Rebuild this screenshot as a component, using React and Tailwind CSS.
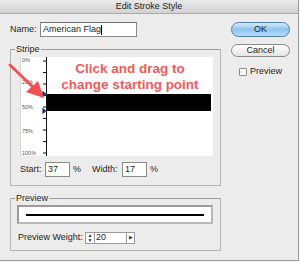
export default function App() {
  return (
    <div className="relative w-[300px] h-[262px] bg-[#f4f4f4] font-['Liberation_Sans',Arial,sans-serif] text-[#1e1e1e] overflow-hidden">
      <div className="w-[299px] h-[261px] bg-[#ececec] border-r border-b border-[#9c9c9c] flex flex-col">
        {/* Title bar */}
        <div className="h-[14px] shrink-0 bg-gradient-to-b from-[#e9e9e9] to-[#d2d2d2] border-b border-[#a9a9a9] flex items-center justify-center text-[9px] leading-none text-[#222]">
          Edit Stroke Style
        </div>

        {/* Body */}
        <div className="flex pl-[10px] pt-[8px]">
          {/* Left column */}
          <div className="w-[211px] flex flex-col">
            <div className="flex items-center h-[15px] text-[9px]">
              <span className="w-[30px]">Name:</span>
              <div className="w-[97px] h-[15px] bg-white border border-[#8a8a8a] border-t-[#6e6e6e] flex items-center pl-[2px]">
                American Flag<span className="w-px h-[10px] bg-black" />
              </div>
            </div>

            {/* Stripe group */}
            <fieldset className="mt-[7px] border border-[#b4b4b4] border-t-[#a0a0a0] pb-[8px]">
              <legend className="ml-[4px] px-[1px] text-[9px] leading-[11px]">Stripe</legend>
              <div className="ml-[9px] mt-[2px] w-[193px] h-[99px] bg-white border-l border-[#d8d8d8] flex">
                <svg width="26" height="99" viewBox="0 0 26 99" className="shrink-0">
                  <g fontFamily="Liberation Sans, Arial, sans-serif" fontSize="5.5" fill="#555">
                    <text x="1" y="5">0%</text>
                    <text x="1" y="27">25%</text>
                    <text x="1" y="52">50%</text>
                    <text x="1" y="76">75%</text>
                    <text x="1" y="98">100%</text>
                  </g>
                  <line x1="25.5" y1="0" x2="25.5" y2="99" stroke="#111" strokeWidth="1" />
                  {[4, 15.5, 27, 38.5, 50, 61.5, 73, 84.5, 96].map((y) => (
                    <line key={y} x1="22" y1={y} x2="25.5" y2={y} stroke="#111" strokeWidth="1" />
                  ))}
                  <path d="M21.5 34 L25.5 37 L21.5 40 Z" fill="#1b2a48" stroke="#4d7ab8" strokeWidth="0.6" />
                  <path d="M21.5 51 L25.5 54 L21.5 57 Z" fill="#1b2a48" stroke="#4d7ab8" strokeWidth="0.6" />
                </svg>
                <div className="flex-1">
                  <div className="mt-[37px] h-[17px] w-[164px] bg-black" />
                </div>
              </div>
              <div className="flex items-center h-[15px] mt-[6px] ml-[9px] text-[9px]">
                <span className="w-[25px]">Start:</span>
                <div className="w-[25px] h-[15px] bg-white border border-[#8a8a8a] flex items-center pl-[2px]">37</div>
                <span className="ml-[3px] w-[19px]">%</span>
                <span className="w-[30px]">Width:</span>
                <div className="w-[25px] h-[15px] bg-white border border-[#8a8a8a] flex items-center pl-[2px]">17</div>
                <span className="ml-[3px]">%</span>
              </div>
            </fieldset>

            {/* Preview group */}
            <fieldset className="mt-[7px] h-[58px] border border-[#b4b4b4] border-t-[#a0a0a0]">
              <legend className="ml-[4px] px-[1px] text-[9px] leading-[11px]">Preview</legend>
              <div className="ml-[6px] mt-[1px] w-[196px] h-[19px] bg-white border-2 border-[#9a9a9a] border-b-[#b8b8b8] border-r-[#b8b8b8] flex items-center px-[7px]">
                <div className="w-full h-[2px] bg-black" />
              </div>
              <div className="flex items-center h-[12px] mt-[8px] ml-[7px] text-[9px]">
                <span className="w-[67px]">Preview Weight:</span>
                <div className="w-[10px] h-[12px] bg-white border border-[#9a9a9a] flex flex-col items-center justify-center text-[5px] leading-[5px] text-[#333]">
                  <span>▲</span>
                  <span>▼</span>
                </div>
                <div className="w-[31px] h-[12px] bg-white border-y border-[#9a9a9a] flex items-center pl-[1px]">20</div>
                <div className="w-[9px] h-[12px] bg-white border border-[#9a9a9a] flex items-center justify-center text-[5px] text-[#333]">▶</div>
              </div>
            </fieldset>
          </div>

          {/* Right column */}
          <div className="ml-[10px] w-[59px] flex flex-col">
            <div className="h-[15px] rounded-full border border-[#4f7fb4] bg-gradient-to-b from-[#d6ebfb] via-[#8ec4f0] to-[#b4dcfa] flex items-center justify-center text-[9px] leading-none">
              OK
            </div>
            <div className="mt-[7px] h-[13px] rounded-full border border-[#8a8a8a] bg-gradient-to-b from-[#ffffff] to-[#e4e4e4] flex items-center justify-center text-[9px] leading-none">
              Cancel
            </div>
            <div className="mt-[10px] ml-[8px] flex items-center text-[9px] leading-none">
              <div className="w-[8px] h-[8px] bg-white border border-[#8a8a8a] rounded-[1px]" />
              <span className="ml-[3px]">Preview</span>
            </div>
          </div>
        </div>
      </div>

      {/* Annotation overlay */}
      <div className="absolute left-[42px] top-[61px] w-[176px] text-center text-[13.5px] leading-[16px] font-bold text-[#f25a5a]">
        Click and drag to
        <br />
        change starting point
      </div>
      <svg className="absolute left-[4px] top-[58px]" width="46" height="46" viewBox="0 0 46 46">
        <line x1="6" y1="7" x2="31" y2="31" stroke="#f25252" strokeWidth="3" strokeLinecap="round" />
        <path d="M40 40 L22 34 L34 23 Z" fill="#f25252" />
      </svg>
    </div>
  );
}
